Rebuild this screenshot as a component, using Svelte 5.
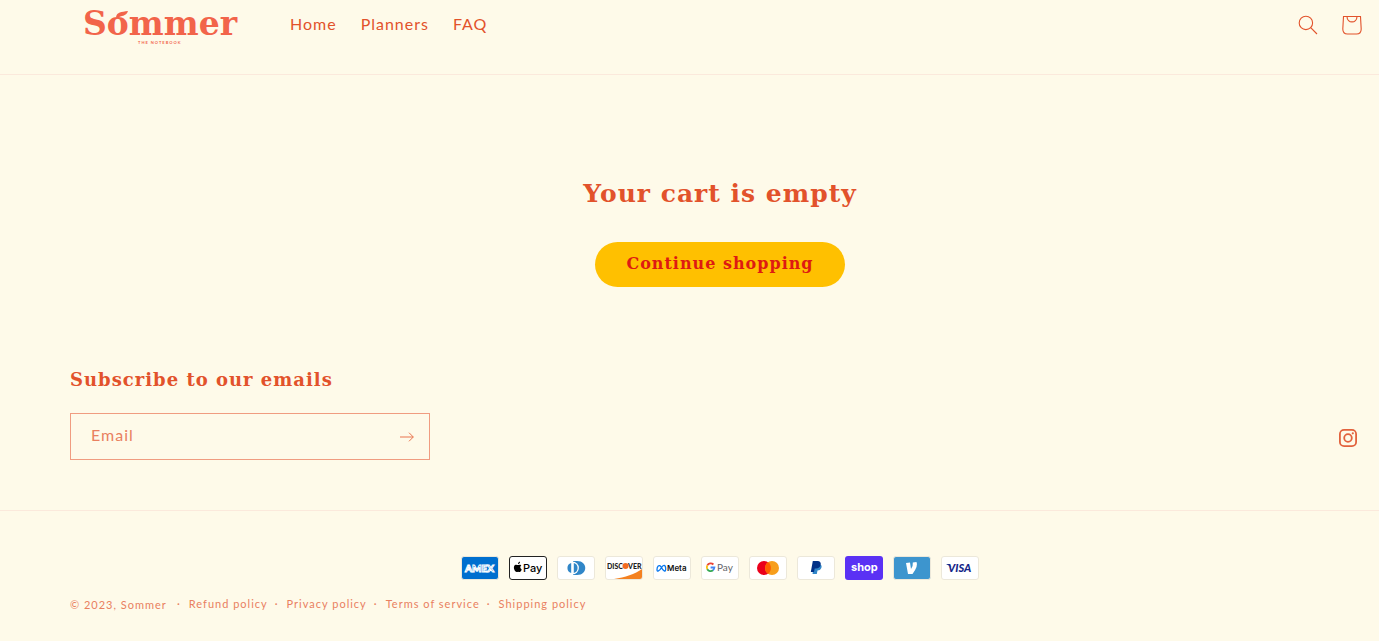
<script>
  let email = $state('');

  const nav = ['Home', 'Planners', 'FAQ'];
  const policies = ['Refund policy', 'Privacy policy', 'Terms of service', 'Shipping policy'];
</script>

<header>
  <a class="logo" href="#home" aria-label="Sommer The Notebook">
    <svg width="156" height="44" viewBox="0 0 156 44">
      <text class="word" x="0" y="34">Sommer</text>
      <path d="M33 16C34 11 38 11 45 10C43 16 38 14 35 17Z" />
      <text class="tag" x="55" y="43">THE NOTEBOOK</text>
    </svg>
  </a>
  <nav>
    {#each nav as item}
      <a href="#{item.toLowerCase()}">{item}</a>
    {/each}
  </nav>
  <div class="tools">
    <button aria-label="Search">
      <svg width="20" height="20" viewBox="0 0 20 20">
        <circle cx="7.9" cy="7.9" r="6.7" />
        <path d="M12.7 12.7L19 19" />
      </svg>
    </button>
    <a href="#cart" aria-label="Cart">
      <svg width="20" height="20" viewBox="0 0 20 20">
        <path d="M1.5 1.5H18.5L19.2 14Q19.2 19 14.5 19H5.5Q.8 19 .8 14ZM5 1.5C5 8.7 15 8.7 15 1.5" />
      </svg>
    </a>
  </div>
</header>

<main>
  <h1>Your cart is empty</h1>
  <a class="shop" href="#planners">Continue shopping</a>
</main>

<footer>
  <div class="subscribe">
    <form onsubmit={(e) => e.preventDefault()}>
      <h2>Subscribe to our emails</h2>
      <div class="field">
        <input type="email" aria-label="Email" placeholder="Email" bind:value={email} />
        <button aria-label="Subscribe">
          <svg width="14" height="10" viewBox="0 0 14 10">
            <path d="M0 5H13.3M9 .7L13.3 5L9 9.3" />
          </svg>
        </button>
      </div>
    </form>
    <a class="insta" href="#instagram" aria-label="Instagram">
      <svg width="18" height="18" viewBox="0 0 18 18">
        <rect x=".9" y=".9" width="16.2" height="16.2" rx="4.2" />
        <circle cx="9" cy="9" r="3.8" />
        <circle class="dot" cx="13.8" cy="4.3" r="1.1" />
      </svg>
    </a>
  </div>

  <div class="bottom">
    <ul class="payments" aria-label="Payment methods">
      <li>
        <svg viewBox="0 0 38 24" role="img" aria-label="American Express">
          <rect class="card" x=".5" y=".5" width="37" height="23" rx="2.5" fill="#006fcf" />
          <text x="4" y="16" font-size="10" font-weight="900" fill="#006fcf" stroke="#fff" stroke-width="1">AMEX</text>
        </svg>
      </li>
      <li>
        <svg viewBox="0 0 38 24" role="img" aria-label="Apple Pay">
          <rect x=".5" y=".5" width="37" height="23" rx="2.5" fill="#fff" stroke="#222" />
          <path d="M12 9.2C10.8 8.2 9.8 9 9 9C8.2 9 7.2 8.3 6.1 9C4 10.4 5 14 6.6 15.6C7.6 16.5 8.1 15.7 9.1 15.7C10 15.7 10.4 16.4 11.3 15.7C12 15 12.5 14.2 12.7 13.4C11 12.7 10.8 10.3 12.3 9.5ZM9 8.2C8.9 6.8 9.8 6 11 5.6C11.2 7 10.3 8.1 9 8.2Z" fill="#000" />
          <text class="inter" x="14" y="16" font-size="11" font-weight="500" fill="#000">Pay</text>
        </svg>
      </li>
      <li>
        <svg viewBox="0 0 38 24" role="img" aria-label="Diners Club">
          <rect class="card" x=".5" y=".5" width="37" height="23" rx="2.5" fill="#fff" />
          <path d="M16 5H20C31 5 31 19 20 19H16Z" fill="#3086c8" />
          <circle cx="15.5" cy="12" r="6.4" fill="#fff" />
          <path d="M14.2 7A5.2 5.2 0 0 0 14.2 17ZM16.8 7A5.2 5.2 0 0 1 16.8 17Z" fill="#3086c8" />
        </svg>
      </li>
      <li>
        <svg viewBox="0 0 38 24" role="img" aria-label="Discover">
          <rect class="card" x=".5" y=".5" width="37" height="23" rx="2.5" fill="#fff" />
          <path d="M9 23C20 21.5 30 18 37 13V21Q37 23 35 23Z" fill="#f48120" />
          <text x="2" y="13" font-size="7" font-weight="900" fill="#222">DISC</text>
          <circle cx="20.5" cy="10" r="3" fill="#f26b21" />
          <text x="23" y="13" font-size="7" font-weight="900" fill="#222">VER</text>
        </svg>
      </li>
      <li>
        <svg viewBox="0 0 38 24" role="img" aria-label="Meta Pay">
          <rect class="card" x=".5" y=".5" width="37" height="23" rx="2.5" fill="#fff" />
          <path d="M8.3 11.2C5.8 7.6 4 11 4 13.5C4 16.4 6.3 15 8.3 11.8C10.5 8 12.7 8.6 12.7 13C12.7 16.4 10.2 15.2 8.3 11.2Z" fill="none" stroke="#0878ef" stroke-width="1.3" />
          <text class="inter" x="14" y="15" font-size="8" font-weight="600" fill="#111">Meta</text>
        </svg>
      </li>
      <li>
        <svg viewBox="0 0 38 24" role="img" aria-label="Google Pay">
          <rect class="card" x=".5" y=".5" width="37" height="23" rx="2.5" fill="#fff" />
          <g fill="none" stroke-width="1.8">
            <path d="M12.4 8.5A3.8 3.8 0 0 0 6.3 9.4" stroke="#ea4335" />
            <path d="M6.3 9.4A3.8 3.8 0 0 0 6.3 13.2" stroke="#fbbc04" />
            <path d="M6.3 13.2A3.8 3.8 0 0 0 12 14.2" stroke="#34a853" />
            <path d="M9.6 11.5H13.4Q13.2 13.2 12 14.2" stroke="#4285f4" />
          </g>
          <text x="16" y="15" font-size="10" fill="#5f6368">Pay</text>
        </svg>
      </li>
      <li>
        <svg viewBox="0 0 38 24" role="img" aria-label="Mastercard">
          <rect class="card" x=".5" y=".5" width="37" height="23" rx="2.5" fill="#fff" />
          <circle cx="15" cy="12" r="7" fill="#eb001b" />
          <circle cx="23" cy="12" r="7" fill="#f79e1b" />
          <path d="M19 6.3A7 7 0 0 1 19 17.7A7 7 0 0 1 19 6.3Z" fill="#ff5f00" />
        </svg>
      </li>
      <li>
        <svg viewBox="0 0 38 24" role="img" aria-label="PayPal">
          <rect class="card" x=".5" y=".5" width="37" height="23" rx="2.5" fill="#fff" />
          <path d="M17 8H22.5Q25.5 9 24.3 12Q23.5 14.5 20.5 14.5L19.8 18H15.5Z" fill="#3086c8" />
          <path d="M15.8 5H20.5Q24.5 5.3 23.6 9Q22.8 12.3 19 12.4H17.7L17 16H13.8Z" fill="#003087" />
        </svg>
      </li>
      <li>
        <svg viewBox="0 0 38 24" role="img" aria-label="Shop Pay">
          <rect width="38" height="24" rx="3" fill="#5a31f4" />
          <text class="inter" x="6" y="15" font-size="11" font-weight="700" fill="#fff">shop</text>
        </svg>
      </li>
      <li>
        <svg viewBox="0 0 38 24" role="img" aria-label="Venmo">
          <rect class="card" x=".5" y=".5" width="37" height="23" rx="2.5" fill="#3d95ce" />
          <path d="M13 7L17 6.5L18 13Q20.3 9.5 19.8 6.5L23.5 6Q25.5 10 19.5 18H15Z" fill="#fff" />
        </svg>
      </li>
      <li>
        <svg viewBox="0 0 38 24" role="img" aria-label="Visa">
          <rect class="card" x=".5" y=".5" width="37" height="23" rx="2.5" fill="#fff" />
          <path d="M5 8H8.2L10.5 11Z" fill="#142688" />
          <text x="7" y="16" font-size="11" font-weight="900" font-style="italic" fill="#142688">VISA</text>
        </svg>
      </li>
    </ul>
    <div class="legal">
      <small>© 2023, <a href="#home">Sommer</a></small>
      <ul>
        {#each policies as policy}
          <li><a href="#policies">{policy}</a></li>
        {/each}
      </ul>
    </div>
  </div>
</footer>

<style>
  :global(body) {
    margin: 0;
    background: #fefae9;
    color: #e2522b;
    font: 16px/24px Lato, sans-serif;
    letter-spacing: 1px;
  }
  a { color: inherit; text-decoration: none; }
  ul { list-style: none; margin: 0; padding: 0; }
  button { background: none; border: 0; padding: 0; color: inherit; cursor: pointer; }
  svg { display: block; }
  h1, h2, .shop { font-family: "DejaVu Serif", serif; font-weight: 700; }
  h1, h2 { margin: 0; }

  header {
    display: flex;
    align-items: flex-start;
    padding: 1px 17px 29px 83px;
    border-bottom: 1px solid #fbe9dc;
  }
  .logo svg { fill: #f2644a; overflow: visible; }
  .word { font: 700 33px "DejaVu Serif", serif; letter-spacing: 0; }
  .tag { font: 700 4px Lato, sans-serif; letter-spacing: 1px; }
  nav { display: flex; gap: 24px; padding: 11px 0 0 51px; flex: 1; }
  .tools { display: flex; gap: 24px; padding-top: 14px; }
  .tools svg { fill: none; stroke: currentColor; stroke-width: 1.1; }

  main {
    display: flex;
    flex-direction: column;
    align-items: center;
    gap: 28px;
    padding: 99px 9px 80px 70px;
  }
  h1 { font-size: 25px; line-height: 40px; }
  .shop {
    box-sizing: border-box;
    min-height: 45px;
    padding: 0 31px;
    border-radius: 23px;
    background: #ffc000;
    color: #de1a12;
    font-size: 16px;
    line-height: 43px;
  }

  .subscribe {
    display: flex;
    justify-content: space-between;
    align-items: flex-end;
    padding: 0 22px 50px 70px;
  }
  form { width: 360px; }
  h2 { font-size: 18px; line-height: 26px; margin-bottom: 20px; }
  .field {
    display: flex;
    box-sizing: border-box;
    height: 47px;
    border: 1px solid #f09c80;
  }
  input {
    flex: 1;
    min-width: 0;
    border: 0;
    padding: 0 20px 3px;
    background: none;
    color: inherit;
    font: inherit;
    letter-spacing: 1px;
  }
  input::placeholder { color: #e9805f; opacity: 1; }
  .field button { width: 44px; display: grid; place-items: center; }
  .field svg { fill: none; stroke: #e9754f; }
  .insta { margin-bottom: 13px; }
  .insta svg { fill: none; stroke: #e2623d; stroke-width: 1.8; }
  .insta .dot { fill: #e2623d; stroke: none; }

  .bottom {
    border-top: 1px solid #fbe9dc;
    padding: 45px 9px 24px 70px;
  }
  .payments { display: flex; justify-content: center; flex-wrap: wrap; gap: 10px; }
  .payments svg { width: 38px; height: 24px; font-family: Lato, sans-serif; letter-spacing: 0; }
  .payments .inter { font-family: Inter, sans-serif; }
  .card { stroke: #ece8da; }
  .legal {
    display: flex;
    align-items: center;
    gap: 10px;
    margin-top: 12px;
    color: #e9805f;
    font-size: 11px;
    line-height: 20px;
  }
  .legal small { font-size: 11px; padding-top: 3px; }
  .legal ul { display: flex; }
  .legal li::before { content: "·"; padding-right: 8px; }
  .legal li + li::before { padding-left: 7px; }
</style>
